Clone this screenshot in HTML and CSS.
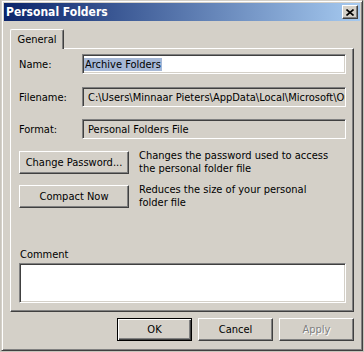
FILE: index.html
```html
<!DOCTYPE html>
<html>
<head>
<meta charset="utf-8">
<link rel="stylesheet" href="styles.css">
</head>
<body>
<div class="window">
  <div class="titlebar">
    <span class="title">Personal Folders</span>
    <div class="close"><svg width="8" height="7" viewBox="0 0 8 7"><path d="M0.5 0.5L7.5 6.5M7.5 0.5L0.5 6.5" stroke="#000" stroke-width="1.6" fill="none"/></svg></div>
  </div>
  <div class="content">
    <div class="tabstrip"><div class="tab">General</div></div>
    <div class="panel">
      <div class="row first">
        <span class="label">Name:</span>
        <div class="field edit"><span class="sel">Archive Folders</span></div>
      </div>
      <div class="row r2">
        <span class="label">Filename:</span>
        <div class="field ro"><span class="path">C:\Users\Minnaar Pieters\AppData\Local\Microsoft\Outlook\archive.pst</span></div>
      </div>
      <div class="row r3">
        <span class="label">Format:</span>
        <div class="field ro">Personal Folders File</div>
      </div>
      <div class="action a1">
        <div class="btn wide">Change Password...</div>
        <div class="desc">Changes the password used to access<br>the personal folder file</div>
      </div>
      <div class="action a2">
        <div class="btn wide">Compact Now</div>
        <div class="desc">Reduces the size of your personal<br>folder file</div>
      </div>
      <div class="comment">
        <div class="clabel">Comment</div>
        <div class="textarea"></div>
      </div>
    </div>
    <div class="footer">
      <div class="btn std default">OK</div>
      <div class="btn std">Cancel</div>
      <div class="btn std disabled">Apply</div>
    </div>
  </div>
</div>
</body>
</html>
```
FILE: styles.css
```css
* { box-sizing: border-box; }
html, body { margin: 0; padding: 0; }
body {
  width: 364px;
  height: 352px;
  overflow: hidden;
  background: #c8c4bc;
  font-family: "DejaVu Sans Condensed", "Liberation Sans", sans-serif;
  font-size: 11px;
  color: #000;
}
.window {
  margin-left: 1px;
  width: 362px;
  height: 351px;
  background: #d4d0c8;
  border: 1px solid;
  border-color: #d4d0c8 #404040 #404040 #d4d0c8;
  box-shadow: inset 1px 1px #fff, inset -1px -1px #808080;
  padding: 2px;
  display: flex;
  flex-direction: column;
}
.titlebar {
  height: 18px;
  flex: none;
  background: linear-gradient(to right, #0a246a, #a6caf0);
  display: flex;
  align-items: center;
  justify-content: space-between;
  padding: 0 2px 0 2px;
}
.title {
  color: #fff;
  font-weight: bold;
  font-size: 12px;
}
.close {
  width: 16px;
  height: 14px;
  background: #d4d0c8;
  border: 1px solid;
  border-color: #fff #404040 #404040 #fff;
  box-shadow: inset -1px -1px #808080;
  display: flex;
  align-items: center;
  justify-content: center;
}
.close svg { display: block; }
.content {
  flex: 1;
  padding: 8px 6px 0 6px;
  display: flex;
  flex-direction: column;
}
.tabstrip {
  display: flex;
  height: 20px;
  margin-bottom: -1px;
  position: relative;
  z-index: 1;
}
.tab {
  width: 54px;
  height: 20px;
  background: #d4d0c8;
  border-top: 1px solid #fff;
  border-left: 1px solid #fff;
  border-right: 1px solid #404040;
  box-shadow: inset -1px 0 #808080;
  border-radius: 2px 2px 0 0;
  display: flex;
  align-items: center;
  justify-content: center;
  padding-bottom: 1px;
}
.panel {
  height: 264px;
  flex: none;
  border: 1px solid;
  border-color: #fff #404040 #404040 #fff;
  box-shadow: inset -1px -1px #808080;
  padding: 5px 7px 8px 8px;
  display: flex;
  flex-direction: column;
}
.row {
  display: flex;
  align-items: center;
  height: 20px;
}
.r2 { margin-top: 13px; }
.r3 { margin-top: 12px; }
.label { width: 63px; flex: none; }
.field {
  flex: 1;
  min-width: 0;
  height: 20px;
  border: 1px solid;
  border-color: #808080 #fff #fff #808080;
  box-shadow: inset 1px 1px #404040, inset -1px -1px #d4d0c8;
  display: flex;
  align-items: center;
  white-space: nowrap;
  overflow: hidden;
}
.path { overflow: hidden; }
.edit { background: #fff; padding-left: 1px; }
.ro { background: #d4d0c8; padding-left: 5px; }
.sel {
  background: #a6b8d6;
  padding: 0 1px;
  line-height: 13px;
}
.action {
  display: flex;
  align-items: center;
}
.a1 { margin-top: 10px; }
.a2 { margin-top: 8px; }
.btn {
  height: 23px;
  background: #d4d0c8;
  border: 1px solid;
  border-color: #fff #404040 #404040 #fff;
  box-shadow: inset -1px -1px #808080;
  display: flex;
  align-items: center;
  justify-content: center;
  flex: none;
}
.wide { width: 110px; }
.desc {
  margin-left: 10px;
  line-height: 13px;
}
.comment {
  margin-top: auto;
  display: flex;
  flex-direction: column;
}
.clabel { padding-left: 1px; line-height: 13px; margin-bottom: 2px; }
.textarea {
  height: 40px;
  background: #fff;
  border: 1px solid;
  border-color: #808080 #fff #fff #808080;
  box-shadow: inset 1px 1px #404040, inset -1px -1px #d4d0c8;
}
.footer {
  margin-top: 6px;
  display: flex;
  justify-content: flex-end;
  gap: 6px;
}
.std { width: 75px; }
.default {
  border-color: #000;
  box-shadow: inset 1px 1px #fff, inset -1px -1px #404040, inset -2px -2px #808080;
}
.disabled {
  color: #808080;
  text-shadow: 1px 1px #fff;
}
```
